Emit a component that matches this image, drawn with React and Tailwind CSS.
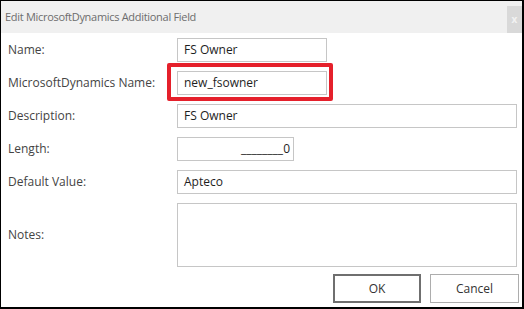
import React from "react";

const font = { fontFamily: '"Open Sans", "Liberation Sans", sans-serif' };

const Field = ({ label, children, tall }) => (
    <div className={`flex items-center ${tall ? "h-[64px]" : "h-[24px]"}`}>
        <div className="w-[176px] shrink-0 pl-[7px] text-[12px] text-[#444]">{label}</div>
        {children}
    </div>
);

const inputCls =
    "h-[24px] border border-[#c6c6c6] bg-white pl-[6px] text-[12px] text-[#1e1e1e] flex items-center";

const App = () => {
    return (
        <div className="w-[524px] h-[309px] bg-black pt-[1px] pl-[1px] pr-[2px] pb-[2px]" style={font}>
            <div className="h-full bg-white flex flex-col">
                <div className="h-[32px] bg-[#f0f0f0] flex items-start justify-between">
                    <span className="pl-[4px] pt-[8px] text-[11px] tracking-[-0.3px] text-[#6d6d6d]">
                        Edit MicrosoftDynamics Additional Field
                    </span>
                    <div className="mt-[5px] w-[15px] h-[27px] bg-[#d9d9d9] flex items-center justify-center text-[10px] text-[#f2f2f2] font-bold">
                        x
                    </div>
                </div>
                <div className="flex flex-col gap-[9px] pt-[5px] pr-[5px]">
                    <Field label="Name:">
                        <div className={`${inputCls} w-[150px]`}>FS Owner</div>
                    </Field>
                    <Field label="MicrosoftDynamics Name:">
                        <div className="relative">
                            <div className={`${inputCls} w-[150px]`}>new_fsowner</div>
                            <div className="absolute left-[-10px] top-[-8px] w-[166px] h-[38px] border-[4px] border-[#e5202b] rounded-[2px]" />
                        </div>
                    </Field>
                    <Field label="Description:">
                        <div className={`${inputCls} flex-1`}>FS Owner</div>
                    </Field>
                    <Field label="Length:">
                        <div className={`${inputCls} w-[117px] justify-end pr-[3px]`}>________0</div>
                    </Field>
                    <Field label="Default Value:">
                        <div className={`${inputCls} flex-1`}>Apteco</div>
                    </Field>
                    <Field label="Notes:" tall>
                        <div className="flex-1 h-[64px] border border-[#c6c6c6] bg-white" />
                    </Field>
                </div>
                <div className="flex justify-end gap-[9px] pt-[7px] pr-[3px]">
                    <button className="w-[88px] h-[29px] border-2 border-[#6f6f6f] bg-white text-[12px] text-[#333]">
                        OK
                    </button>
                    <button className="w-[89px] h-[29px] border border-[#adadad] bg-white text-[12px] text-[#333]">
                        Cancel
                    </button>
                </div>
            </div>
        </div>
    );
};

export default App;
